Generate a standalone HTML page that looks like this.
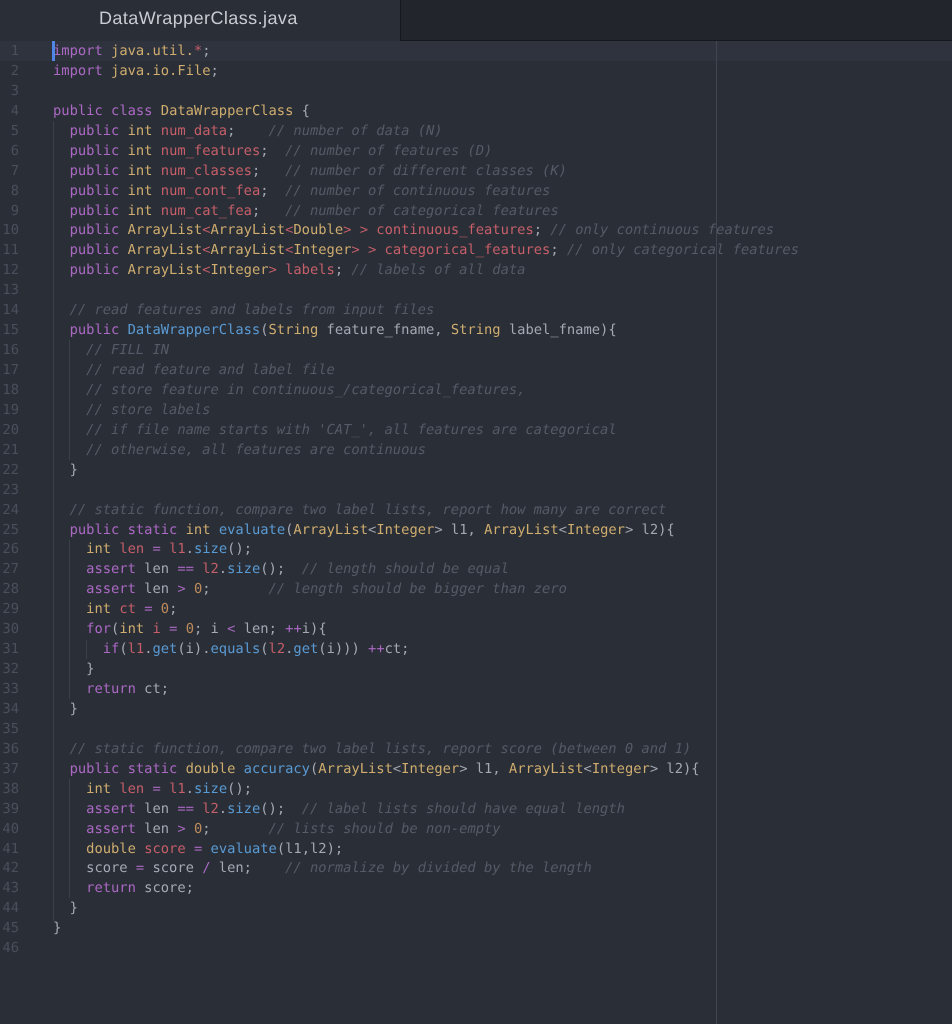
<!DOCTYPE html>
<html lang="en">
<head>
<meta charset="utf-8">
<title>DataWrapperClass.java</title>
<style>
html,body{margin:0;padding:0;background:#2a2e37;}
body{width:952px;height:1024px;position:relative;overflow:hidden;}
.bar{position:absolute;left:0;top:0;width:952px;height:40px;background:#22252c;border-bottom:1px solid #16181d;}
.tab{position:absolute;left:0;top:0;width:400px;height:41px;background:#2a2e37;border-right:1px solid #16181d;}
.title{position:absolute;left:99px;top:6px;font:18px/24px "Liberation Sans",sans-serif;letter-spacing:.43px;color:#c9ccd3;white-space:pre;text-rendering:geometricPrecision;filter:blur(.25px);}
.cur{position:absolute;left:0;top:41px;width:952px;height:20px;background:#2f333e;}
.caret{position:absolute;left:52px;top:41px;width:3px;height:20px;background:#4f86e8;z-index:3;}
.wrap{position:absolute;left:716px;top:41px;width:1px;height:983px;background:#41454f;z-index:3;}
.g{position:absolute;width:1px;background:#3c404a;}
pre{margin:0;position:absolute;top:42px;font-family:"DejaVu Sans Mono",monospace;font-size:13.78px;line-height:19.93px;text-rendering:geometricPrecision;filter:blur(.25px);}
#nums{left:0;width:19px;text-align:right;color:#4a4f5b;}
#code{left:53px;color:#a4a9b3;z-index:2;}
.k{color:#ab69c4}.t{color:#cfad6e}.v{color:#c65f69}.f{color:#5a9bd4}.n{color:#bd8a5b}
.c{color:#555a66;font-style:italic}
</style>
</head>
<body>
<div class="bar"></div>
<div class="tab"></div>
<div class="title">DataWrapperClass.java</div>
<div class="cur"></div>
<div class="g" style="left:53px;top:121px;height:800px"></div>
<div class="g" style="left:69px;top:340px;height:120px"></div>
<div class="g" style="left:69px;top:540px;height:159px"></div>
<div class="g" style="left:86px;top:640px;height:19px"></div>
<div class="g" style="left:69px;top:779px;height:119px"></div>
<div class="wrap"></div>
<div class="caret"></div>
<pre id="nums">1
2
3
4
5
6
7
8
9
10
11
12
13
14
15
16
17
18
19
20
21
22
23
24
25
26
27
28
29
30
31
32
33
34
35
36
37
38
39
40
41
42
43
44
45
46</pre>
<pre id="code"><span class="k">import</span> <span class="t">java.util.</span><span class="v">*</span>;
<span class="k">import</span> <span class="t">java.io.File</span>;

<span class="k">public</span> <span class="k">class</span> <span class="t">DataWrapperClass</span> {
  <span class="k">public</span> <span class="t">int</span> <span class="v">num_data</span>;    <span class="c">// number of data (N)</span>
  <span class="k">public</span> <span class="t">int</span> <span class="v">num_features</span>;  <span class="c">// number of features (D)</span>
  <span class="k">public</span> <span class="t">int</span> <span class="v">num_classes</span>;   <span class="c">// number of different classes (K)</span>
  <span class="k">public</span> <span class="t">int</span> <span class="v">num_cont_fea</span>;  <span class="c">// number of continuous features</span>
  <span class="k">public</span> <span class="t">int</span> <span class="v">num_cat_fea</span>;   <span class="c">// number of categorical features</span>
  <span class="k">public</span> <span class="t">ArrayList</span><span class="v">&lt;</span><span class="t">ArrayList</span><span class="v">&lt;</span><span class="t">Double</span><span class="v">&gt; &gt; continuous_features</span>; <span class="c">// only continuous features</span>
  <span class="k">public</span> <span class="t">ArrayList</span><span class="v">&lt;</span><span class="t">ArrayList</span><span class="v">&lt;</span><span class="t">Integer</span><span class="v">&gt; &gt; categorical_features</span>; <span class="c">// only categorical features</span>
  <span class="k">public</span> <span class="t">ArrayList</span><span class="v">&lt;</span><span class="t">Integer</span><span class="v">&gt; labels</span>; <span class="c">// labels of all data</span>

  <span class="c">// read features and labels from input files</span>
  <span class="k">public</span> <span class="f">DataWrapperClass</span>(<span class="t">String</span> feature_fname, <span class="t">String</span> label_fname){
    <span class="c">// FILL IN</span>
    <span class="c">// read feature and label file</span>
    <span class="c">// store feature in continuous_/categorical_features,</span>
    <span class="c">// store labels</span>
    <span class="c">// if file name starts with 'CAT_', all features are categorical</span>
    <span class="c">// otherwise, all features are continuous</span>
  }

  <span class="c">// static function, compare two label lists, report how many are correct</span>
  <span class="k">public</span> <span class="k">static</span> <span class="t">int</span> <span class="f">evaluate</span>(<span class="t">ArrayList</span>&lt;<span class="t">Integer</span>&gt; l1, <span class="t">ArrayList</span>&lt;<span class="t">Integer</span>&gt; l2){
    <span class="t">int</span> <span class="v">len</span> <span class="k">=</span> <span class="v">l1</span>.<span class="f">size</span>();
    <span class="k">assert</span> len <span class="k">==</span> <span class="v">l2</span>.<span class="f">size</span>();  <span class="c">// length should be equal</span>
    <span class="k">assert</span> len <span class="k">&gt;</span> <span class="n">0</span>;       <span class="c">// length should be bigger than zero</span>
    <span class="t">int</span> <span class="v">ct</span> <span class="k">=</span> <span class="n">0</span>;
    <span class="k">for</span>(<span class="t">int</span> <span class="v">i</span> <span class="k">=</span> <span class="n">0</span>; i <span class="k">&lt;</span> len; <span class="k">++</span>i){
      <span class="k">if</span>(<span class="v">l1</span>.<span class="f">get</span>(i).<span class="f">equals</span>(<span class="v">l2</span>.<span class="f">get</span>(i))) <span class="k">++</span>ct;
    }
    <span class="k">return</span> ct;
  }

  <span class="c">// static function, compare two label lists, report score (between 0 and 1)</span>
  <span class="k">public</span> <span class="k">static</span> <span class="t">double</span> <span class="f">accuracy</span>(<span class="t">ArrayList</span>&lt;<span class="t">Integer</span>&gt; l1, <span class="t">ArrayList</span>&lt;<span class="t">Integer</span>&gt; l2){
    <span class="t">int</span> <span class="v">len</span> <span class="k">=</span> <span class="v">l1</span>.<span class="f">size</span>();
    <span class="k">assert</span> len <span class="k">==</span> <span class="v">l2</span>.<span class="f">size</span>();  <span class="c">// label lists should have equal length</span>
    <span class="k">assert</span> len <span class="k">&gt;</span> <span class="n">0</span>;       <span class="c">// lists should be non-empty</span>
    <span class="t">double</span> <span class="v">score</span> <span class="k">=</span> <span class="f">evaluate</span>(l1,l2);
    score <span class="k">=</span> score <span class="k">/</span> len;    <span class="c">// normalize by divided by the length</span>
    <span class="k">return</span> score;
  }
}
</pre>
</body>
</html>
